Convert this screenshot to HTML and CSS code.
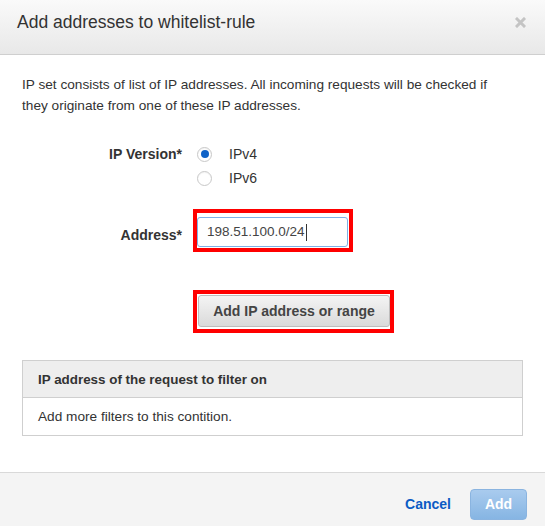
FILE: index.html
```html
<!DOCTYPE html>
<html>
<head>
<meta charset="utf-8">
<link rel="stylesheet" href="styles.css">
</head>
<body>
<div class="modal">
  <div class="modal-header">
    <h1 class="title">Add addresses to whitelist-rule</h1>
    <span class="close" aria-label="close">
      <svg width="11" height="11" viewBox="0 0 11 11"><path d="M2 2 L9 9 M9 2 L2 9" stroke="#c4c4c4" stroke-width="3" stroke-linecap="square"/></svg>
    </span>
  </div>
  <div class="modal-body">
    <p class="desc">IP set consists of list of IP addresses. All incoming requests will be checked if they originate from one of these IP addresses.</p>
    <div class="form-row radios-row">
      <div class="label">IP Version*</div>
      <div class="radios">
        <div class="radio-item"><span class="radio checked"></span><span class="radio-text">IPv4</span></div>
        <div class="radio-item"><span class="radio"></span><span class="radio-text">IPv6</span></div>
      </div>
    </div>
    <div class="form-row address-row">
      <div class="label">Address*</div>
      <div class="highlight input-hl">
        <div class="input">198.51.100.0/24<span class="caret"></span></div>
      </div>
    </div>
    <div class="btn-row">
      <div class="highlight btn-hl">
        <button class="btn">Add IP address or range</button>
      </div>
    </div>
    <div class="table">
      <div class="table-head">IP address of the request to filter on</div>
      <div class="table-body">Add more filters to this contition.</div>
    </div>
  </div>
  <div class="modal-footer">
    <a class="cancel">Cancel</a>
    <button class="add">Add</button>
  </div>
</div>
</body>
</html>
```
FILE: styles.css
```css
* { box-sizing: border-box; }
html, body { margin: 0; padding: 0; }
body {
  width: 545px;
  height: 526px;
  background: #fff;
  font-family: "Liberation Sans", Arial, Helvetica, sans-serif;
  color: #333;
  overflow: hidden;
}
.modal { width: 545px; height: 526px; display: flex; flex-direction: column; }
.modal-header {
  height: 55px;
  flex: none;
  background: linear-gradient(#fafafa, #e8e8e8);
  border-bottom: 1px solid #cfcfcf;
  display: flex;
  align-items: center;
  justify-content: space-between;
  padding: 0 19px 10px 17px;
}
.title { margin: 0; font-size: 17.5px; font-weight: normal; color: #333; }
.close { display: flex; }
.modal-body { flex: 1; padding: 19px 22px 0 22px; }
.desc { margin: 0; max-width: 475px; font-size: 13.65px; line-height: 21px; color: #333; }
.form-row { display: grid; grid-template-columns: 160px 1fr; column-gap: 15px; align-items: center; }
.label { text-align: right; font-weight: bold; font-size: 14px; color: #333; }
.radios-row { margin-top: 26px; align-items: start; }
.radios-row .label { line-height: 24px; }
.radio-item { display: flex; align-items: center; height: 24px; }
.radio {
  width: 15px; height: 15px; border-radius: 50%;
  border: 1px solid #c8c8c8; background: #fff;
  display: flex; align-items: center; justify-content: center;
  box-shadow: inset 0 1px 1px rgba(0,0,0,0.05);
}
.radio.checked::after { content: ""; width: 8px; height: 8px; border-radius: 50%; background: #0f62c7; }
.radio-text { margin-left: 17px; font-size: 14px; color: #333; }
.address-row { margin-top: 19px; }
.address-row .label { padding-top: 8px; }
.highlight { border: 4px solid #ff0000; }
.input-hl { width: 160px; margin-left: -4px; padding: 4px 1px 1px 0px; }
.input {
  height: 30px; width: 151px;
  border: 1px solid #7fb0e6; border-radius: 3px;
  padding: 0 9px; font-size: 13.5px; line-height: 28px; color: #444;
  display: flex; align-items: center;
}
.caret { display: inline-block; width: 1px; height: 17px; background: #333; margin-left: 1px; }
.btn-row { margin-top: 38px; display: flex; padding-left: 171px; }
.btn-hl { padding: 1px 0 2px 1px; }
.btn {
  width: 192px; height: 32px; display: block;
  border: 1px solid #bdbdbd; border-radius: 3px;
  background: linear-gradient(#f4f4f4, #dadada);
  font-family: inherit; font-size: 14px; font-weight: bold; color: #444;
  padding: 0;
}
.table { margin-top: 27px; border: 1px solid #cfcfcf; }
.table-head {
  height: 37px; background: #eeeeee; border-bottom: 1px solid #cfcfcf;
  padding: 0 15px; display: flex; align-items: center;
  font-weight: bold; font-size: 13.4px; color: #333;
}
.table-body { height: 37px; padding: 0 15px; display: flex; align-items: center; font-size: 13.65px; color: #333; }
.modal-footer {
  height: 54px; flex: none; background: #f4f4f4; border-top: 1px solid #d9d9d9;
  display: flex; align-items: center; justify-content: flex-end; padding: 9px 18px 0 0;
}
.cancel { font-weight: bold; font-size: 14px; color: #0b5bc4; margin-right: 19px; }
.add {
  width: 57px; height: 31px; border: 1px solid #8ab4e0; border-radius: 4px;
  background: linear-gradient(#a9cbee, #86b5e3);
  color: #fff; font-family: inherit; font-weight: bold; font-size: 14px; padding: 0;
}
```
